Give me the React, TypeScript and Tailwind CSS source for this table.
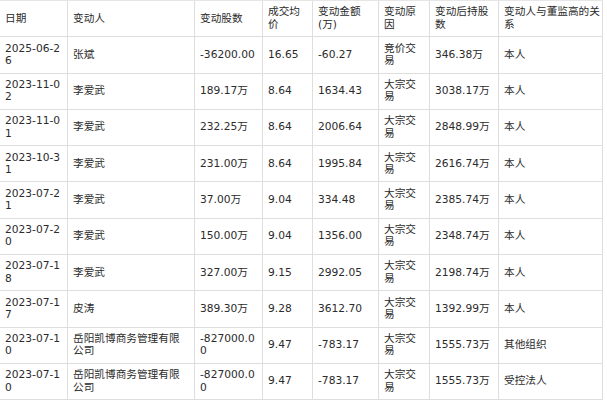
import React from "react";

const header = ["日期", "变动人", "变动股数", "成交均价", "变动金额(万)", "变动原因", "变动后持股数", "变动人与董监高的关系"];

const rows: string[][] = [
  ["2025-06-26", "张斌", "-36200.00", "16.65", "-60.27", "竞价交易", "346.38万", "本人"],
  ["2023-11-02", "李爱武", "189.17万", "8.64", "1634.43", "大宗交易", "3038.17万", "本人"],
  ["2023-11-01", "李爱武", "232.25万", "8.64", "2006.64", "大宗交易", "2848.99万", "本人"],
  ["2023-10-31", "李爱武", "231.00万", "8.64", "1995.84", "大宗交易", "2616.74万", "本人"],
  ["2023-07-21", "李爱武", "37.00万", "9.04", "334.48", "大宗交易", "2385.74万", "本人"],
  ["2023-07-20", "李爱武", "150.00万", "9.04", "1356.00", "大宗交易", "2348.74万", "本人"],
  ["2023-07-18", "李爱武", "327.00万", "9.15", "2992.05", "大宗交易", "2198.74万", "本人"],
  ["2023-07-17", "皮涛", "389.30万", "9.28", "3612.70", "大宗交易", "1392.99万", "本人"],
  ["2023-07-10", "岳阳凯博商务管理有限公司", "-827000.00", "9.47", "-783.17", "大宗交易", "1555.73万", "其他组织"],
  ["2023-07-10", "岳阳凯博商务管理有限公司", "-827000.00", "9.47", "-783.17", "大宗交易", "1555.73万", "受控法人"],
];

const padR = ["pr-[3px]", "pr-[10px]", "pr-[3px]", "pr-[3px]", "pr-[3px]", "pr-[3px]", "pr-[3px]", "pr-[1px]"];

function Cell({ text, col }: { text: string; col: number }) {
  return (
    <div className={"h-[36.3px] border-r border-b border-[#dedede] pl-[5px] flex items-center overflow-hidden " + padR[col]}>
      <span className="block w-full break-all leading-[12.3px]">{text}</span>
    </div>
  );
}

export default function App() {
  return (
    <div
      className="w-[607px] h-[401px] overflow-hidden bg-white text-[#2b2b2b] text-[10.67px]"
      style={{ fontFamily: '"DejaVu Sans", "Noto Sans CJK SC", sans-serif' }}
    >
      <div className="w-[603px] grid grid-cols-[68px_127px_68px_50px_66px_51px_69px_104px] border-t border-[#e6e6e6]">
        {header.map((h, i) => (
          <Cell key={"h" + i} text={h} col={i} />
        ))}
        {rows.map((r, ri) =>
          r.map((c, ci) => <Cell key={ri + "-" + ci} text={c} col={ci} />)
        )}
      </div>
    </div>
  );
}
